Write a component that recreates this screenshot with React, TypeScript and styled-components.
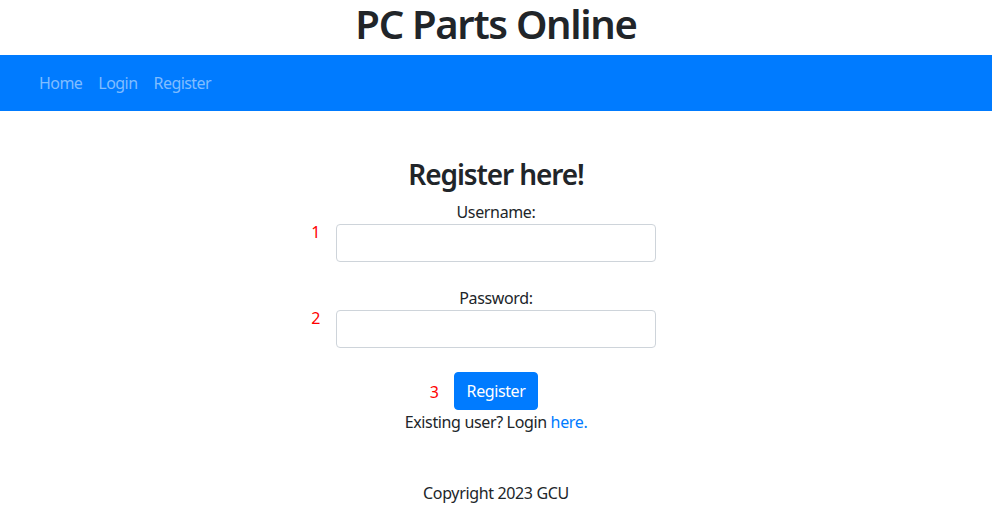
import React from "react";
import styled, { createGlobalStyle } from "styled-components";

const GlobalStyle = createGlobalStyle`
  html, body {
    margin: 0;
    padding: 0;
    background: #ffffff;
  }
  body {
    font-family: "Noto Sans", "Open Sans", sans-serif;
    font-size: 16px;
    line-height: 24px;
    letter-spacing: -0.35px;
    color: #212529;
  }
  * { box-sizing: border-box; }
`;

const Title = styled.h1`
  margin: 0 0 7px;
  font-size: 40px;
  font-weight: 600;
  line-height: 48px;
  letter-spacing: -1.3px;
  text-align: center;
  color: #212529;
`;

const NavBar = styled.nav`
  display: flex;
  align-items: center;
  height: 56px;
  padding: 8px 31px;
  background: #007bff;
`;

const NavLink = styled.a`
  padding: 8px;
  color: #80bdff;
  text-decoration: none;
  font-size: 16px;
  line-height: 24px;
  letter-spacing: -0.55px;
`;

const Main = styled.main`
  padding-top: 47px;
  display: flex;
  flex-direction: column;
  align-items: stretch;
`;

const Heading = styled.h3`
  margin: 0 0 8px;
  font-size: 28px;
  font-weight: 600;
  line-height: 33.6px;
  letter-spacing: -1.1px;
  text-align: center;
`;

const Field = styled.div`
  display: grid;
  grid-template-columns: 1fr 320px 1fr;
  margin-bottom: 24px;
`;

const FieldLabel = styled.label`
  grid-column: 2;
  text-align: center;
  line-height: 24px;
`;

const Marker = styled.span<{ $gap: number }>`
  grid-column: 1;
  justify-self: end;
  align-self: start;
  margin-top: -4px;
  margin-right: ${(p) => p.$gap}px;
  color: #ff0000;
  line-height: 24px;
`;

const Input = styled.input`
  grid-column: 2;
  width: 320px;
  height: 38px;
  padding: 6px 12px;
  border: 1px solid #ced4da;
  border-radius: 4px;
  font: inherit;
  color: #495057;
  background: #fff;
`;

const ButtonRow = styled.div`
  display: grid;
  grid-template-columns: 1fr auto 1fr;
  align-items: center;
`;

const ButtonMarker = styled(Marker)`
  align-self: center;
  margin-top: 2px;
`;

const Button = styled.button`
  grid-column: 2;
  height: 38px;
  padding: 6px 12px;
  border: 1px solid #007bff;
  border-radius: 4px;
  background: #007bff;
  color: #ffffff;
  font: inherit;
  letter-spacing: -0.4px;
  line-height: 24px;
`;

const Note = styled.p`
  margin: 0;
  text-align: center;
  line-height: 24px;
`;

const InlineLink = styled.a`
  color: #007bff;
  text-decoration: none;
`;

const Footer = styled.footer`
  margin-top: 47px;
  text-align: center;
  line-height: 24px;
`;

export default function App() {
  return (
    <>
      <GlobalStyle />
      <Title>PC Parts Online</Title>
      <NavBar>
        <NavLink href="#">Home</NavLink>
        <NavLink href="#">Login</NavLink>
        <NavLink href="#">Register</NavLink>
      </NavBar>
      <Main>
        <Heading>Register here!</Heading>
        <Field>
          <FieldLabel>Username:</FieldLabel>
          <Marker $gap={16}>1</Marker>
          <Input type="text" />
        </Field>
        <Field>
          <FieldLabel>Password:</FieldLabel>
          <Marker $gap={16}>2</Marker>
          <Input type="password" />
        </Field>
        <ButtonRow>
          <ButtonMarker $gap={15}>3</ButtonMarker>
          <Button>Register</Button>
        </ButtonRow>
        <Note>
          Existing user? Login <InlineLink href="#">here.</InlineLink>
        </Note>
        <Footer>Copyright 2023 GCU</Footer>
      </Main>
    </>
  );
}
